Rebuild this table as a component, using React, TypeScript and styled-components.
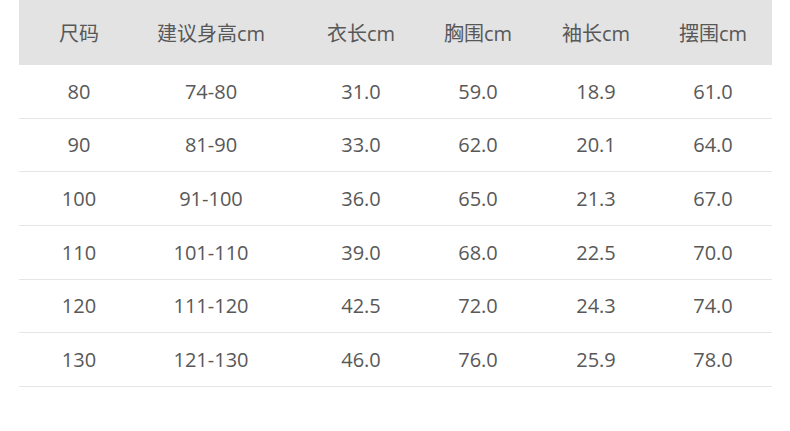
import React from 'react'
import styled, { createGlobalStyle } from 'styled-components'

const GlobalStyle = createGlobalStyle`
  html, body {
    margin: 0;
    padding: 0;
    background: #ffffff;
  }
  body {
    font-family: "Open Sans", "Noto Sans CJK SC", sans-serif;
    color: #555555;
  }
`

const Page = styled.div`
  width: 790px;
  height: 431px;
  padding: 0 18px 0 19px;
  box-sizing: border-box;
  background: #ffffff;
`

const COLUMNS = '120px 144px 156px 78px 158px 76px 21px'

const HeaderRow = styled.div`
  display: grid;
  grid-template-columns: ${COLUMNS};
  height: 65px;
  align-items: center;
  background: #e3e3e3;
`

const HeadCell = styled.div`
  text-align: center;
  font-size: 20px;
  color: #585858;
  white-space: nowrap;
  padding-bottom: 1px;
`

const Row = styled.div`
  display: grid;
  grid-template-columns: ${COLUMNS};
  height: 53.67px;
  box-sizing: border-box;
  align-items: center;
  border-bottom: 1px solid #e6e6e6;
`

const Cell = styled.div`
  text-align: center;
  font-size: 20px;
  color: #585858;
  white-space: nowrap;
`

const headers = ['尺码', '建议身高cm', '衣长cm', '胸围cm', '袖长cm', '摆围cm']

const rows = [
  ['80', '74-80', '31.0', '59.0', '18.9', '61.0'],
  ['90', '81-90', '33.0', '62.0', '20.1', '64.0'],
  ['100', '91-100', '36.0', '65.0', '21.3', '67.0'],
  ['110', '101-110', '39.0', '68.0', '22.5', '70.0'],
  ['120', '111-120', '42.5', '72.0', '24.3', '74.0'],
  ['130', '121-130', '46.0', '76.0', '25.9', '78.0'],
]

export default function App() {
  return (
    <>
      <GlobalStyle />
      <Page>
        <HeaderRow>
          {headers.map((h) => (
            <HeadCell key={h}>{h}</HeadCell>
          ))}
        </HeaderRow>
        {rows.map((r) => (
          <Row key={r[0]}>
            {r.map((v, i) => (
              <Cell key={i}>{v}</Cell>
            ))}
          </Row>
        ))}
      </Page>
    </>
  )
}
